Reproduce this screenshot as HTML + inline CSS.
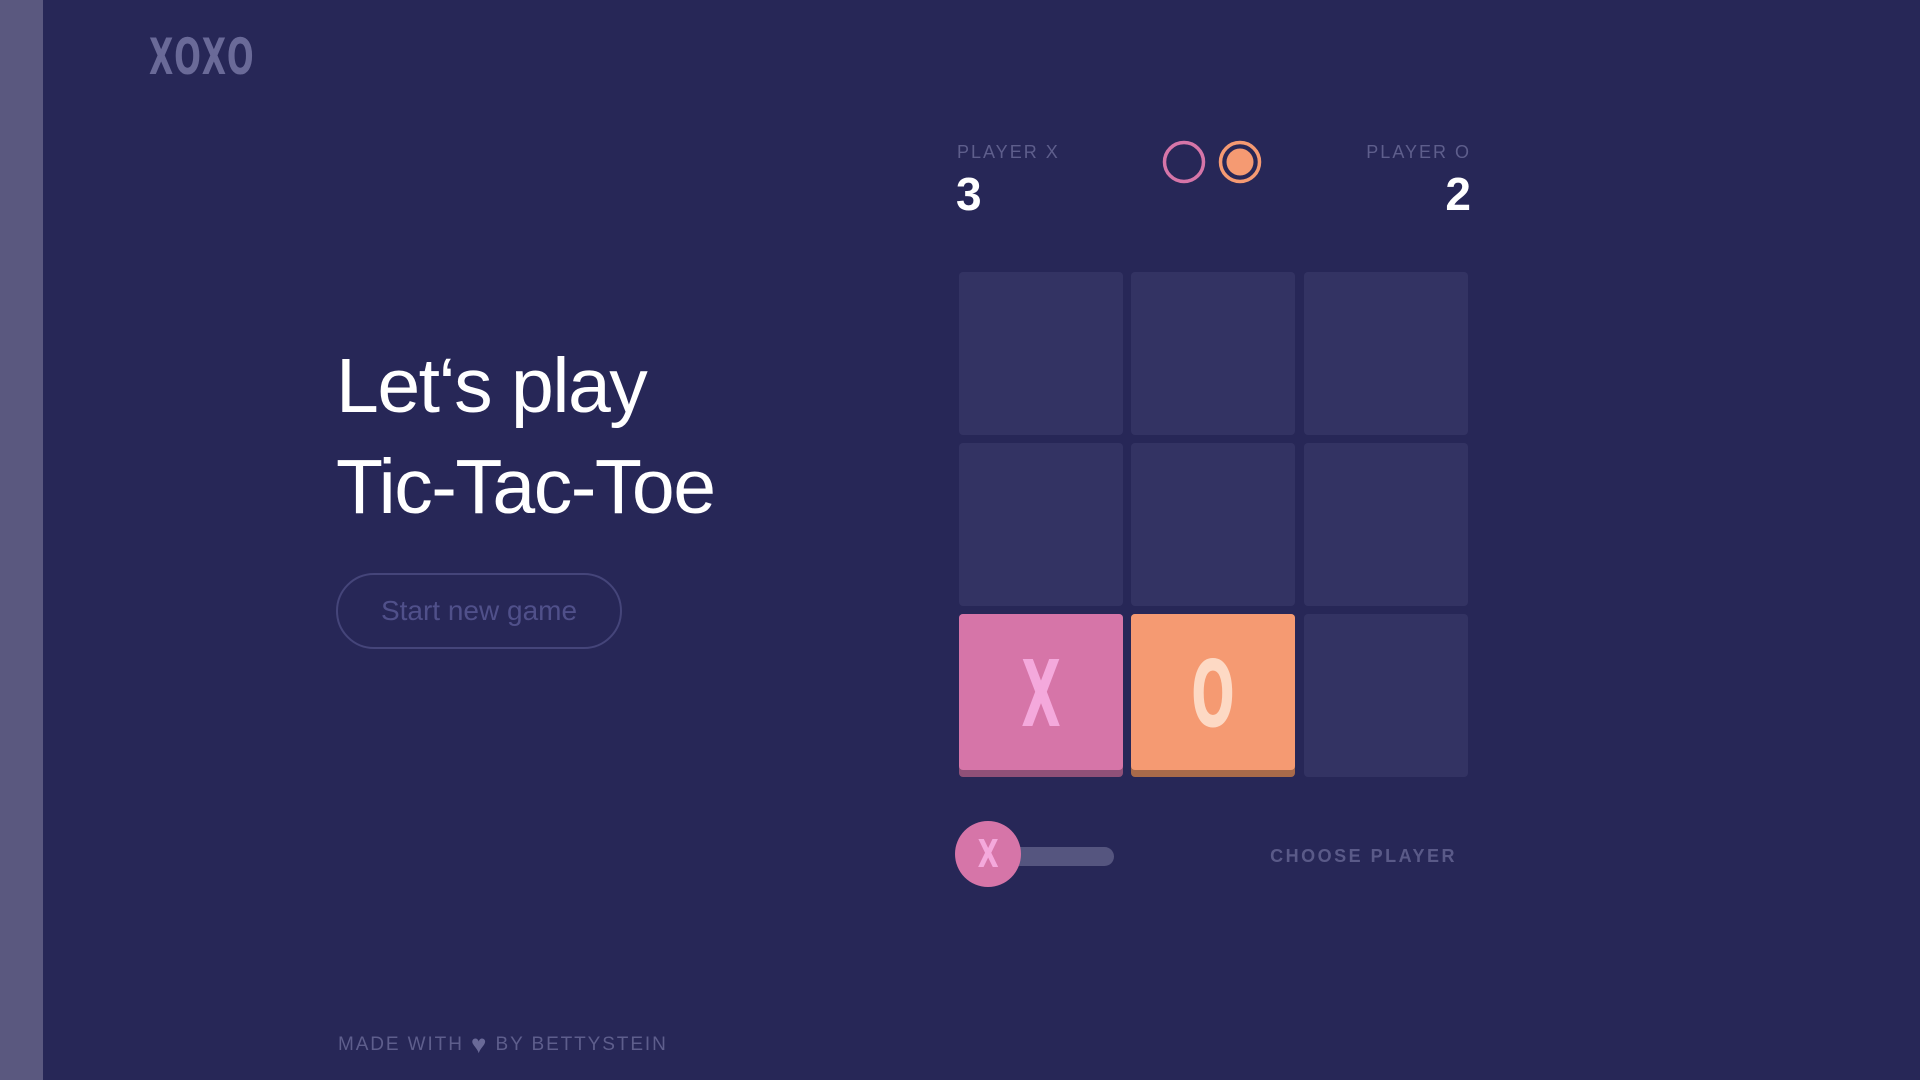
<!DOCTYPE html>
<html><head><meta charset="utf-8"><style>
*{margin:0;padding:0;box-sizing:border-box}
body{width:1920px;height:1080px;background:#272757;font-family:"Liberation Sans",sans-serif;position:relative;overflow:hidden}
.side{position:absolute;left:0;top:0;width:43px;height:1080px;background:#5a587f}
.cond{font-family:"DejaVu Sans Condensed","Liberation Sans Narrow","DejaVu Sans",sans-serif;font-weight:bold}
.logo{position:absolute;left:149px;top:28px;font-size:50px;color:#6a6a98;transform:scaleX(0.7);transform-origin:left top;letter-spacing:3px}
h1{position:absolute;left:336px;top:336px;font-size:77px;font-weight:normal;color:#fff;line-height:101px;letter-spacing:-1.5px}
.btn{position:absolute;left:336px;top:573px;width:286px;height:76px;border:2px solid #45457a;border-radius:38px;color:#50508a;font-size:28px;text-align:center;line-height:72px}
.lab{position:absolute;font-size:18px;letter-spacing:2px;color:#5e5e8c}
.score{position:absolute;font-size:46px;font-weight:bold;color:#fff}
.cell{position:absolute;width:164px;height:163px;background:#333363;border-radius:4px}
.mark{position:absolute;left:0;right:0;text-align:center;font-size:92px;top:27px}
.foot{position:absolute;left:338px;top:1029px;font-size:19px;letter-spacing:1.9px;color:#5e5e8c}
</style></head><body>
<div class="side"></div>
<div class="logo cond">XOXO</div>
<h1>Let‘s play<br>Tic-Tac-Toe</h1>
<div class="btn">Start new game</div>
<div class="lab" style="left:957px;top:142px">PLAYER X</div>
<div class="lab" style="right:449px;top:142px">PLAYER O</div>
<div class="score" style="left:956px;top:167px">3</div>
<div class="score" style="right:449px;top:167px">2</div>
<svg style="position:absolute;left:1155px;top:135px" width="120" height="56">
<circle cx="29" cy="27" r="19.5" fill="none" stroke="#d675a8" stroke-width="3.5"/>
<circle cx="85" cy="27" r="19.5" fill="none" stroke="#f59a72" stroke-width="3.5"/>
<circle cx="85" cy="27" r="13.5" fill="#f59a72"/>
</svg>
<div class="cell" style="left:959px;top:272px"></div>
<div class="cell" style="left:1131px;top:272px"></div>
<div class="cell" style="left:1304px;top:272px"></div>
<div class="cell" style="left:959px;top:443px"></div>
<div class="cell" style="left:1131px;top:443px"></div>
<div class="cell" style="left:1304px;top:443px"></div>
<div class="cell" style="left:959px;top:614px;background:#8f5078"><div style="position:absolute;left:0;top:0;width:164px;height:156px;background:#d675a8;border-radius:4px"></div><div class="mark cond" style="color:#f4a9dc;transform:scaleX(0.62)">X</div></div>
<div class="cell" style="left:1131px;top:614px;background:#a86a4a"><div style="position:absolute;left:0;top:0;width:164px;height:156px;background:#f59a72;border-radius:4px"></div><div class="mark cond" style="color:#fdd9c4;transform:scaleX(0.62)">O</div></div>
<div class="cell" style="left:1304px;top:614px"></div>
<div style="position:absolute;left:1010px;top:847px;width:104px;height:19px;border-radius:10px;background:#55557f"></div>
<div class="cond" style="position:absolute;left:955px;top:821px;width:66px;height:66px;border-radius:50%;background:#d675a8;color:#f4a9dc;font-size:38px;text-align:center;line-height:66px"><span style="display:inline-block;transform:scaleX(0.8)">X</span></div>
<div class="lab" style="right:463px;top:846px;font-weight:bold;color:#5a5a88;letter-spacing:2.5px">CHOOSE PLAYER</div>
<div class="foot">MADE WITH <span style="color:#6a6a98;font-size:26px;vertical-align:-3px">♥</span> BY BETTYSTEIN</div>
</body></html>
